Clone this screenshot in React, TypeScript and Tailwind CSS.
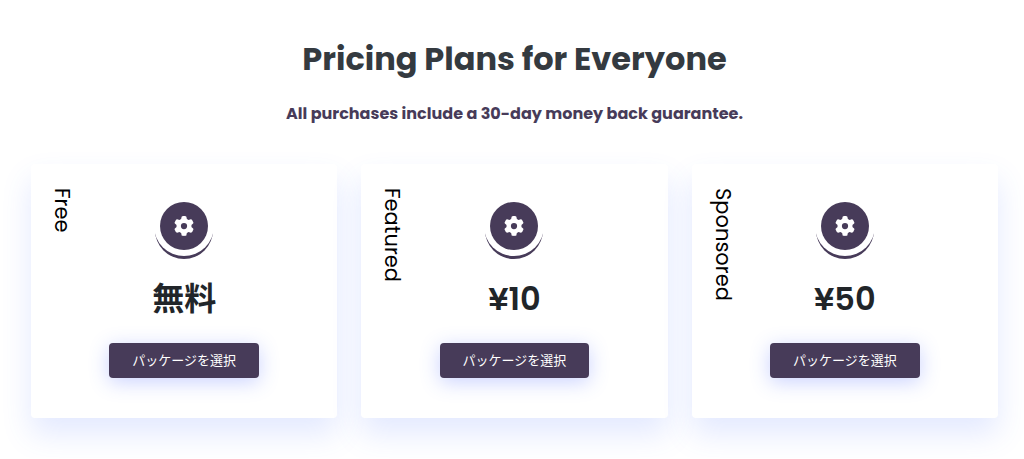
import { FaGear } from "react-icons/fa6";

type Plan = { name: string; price: string };

const plans: Plan[] = [
  { name: "Free", price: "無料" },
  { name: "Featured", price: "¥10" },
  { name: "Sponsored", price: "¥50" },
];

function PlanCard({ name, price }: Plan) {
  return (
    <article className="grid grid-cols-[30px_1fr_30px] rounded bg-white px-4 pt-6 pb-10 shadow-[0_16px_30px_rgba(65,105,255,0.15)]">
      <h3 className="justify-self-end text-[21px] leading-[30px] font-normal text-black [writing-mode:vertical-rl]">
        {name}
      </h3>
      <div className="flex flex-col items-center pt-2">
        <div className="rounded-full bg-white p-[6px] shadow-[0_4px_0_-1px_#473b59]">
          <div className="flex size-12 items-center justify-center rounded-full bg-[#473b59] text-white">
            <FaGear className="size-5" aria-hidden="true" />
          </div>
        </div>
        <p className="mt-[23px] text-[32px] leading-10 font-semibold text-[#212529]">{price}</p>
        <button
          type="button"
          className="mt-6 h-[35px] rounded bg-[#473b59] px-[23px] text-[13px] whitespace-nowrap text-white shadow-[0_4px_20px_rgba(65,95,255,0.28)]"
        >
          パッケージを選択
        </button>
      </div>
    </article>
  );
}

export default function App() {
  return (
    <main className="bg-white pt-[35px] pr-[26px] pb-10 pl-[31px] font-['Poppins','Inter','Noto_Sans_CJK_JP',sans-serif]">
      <header className="text-center">
        <h1 className="text-[32px] leading-12 font-bold text-[#343a40]">Pricing Plans for Everyone</h1>
        <p className="mt-[17px] text-base leading-7 font-bold text-[#473b59]">
          All purchases include a 30-day money back guarantee.
        </p>
      </header>
      <section className="mt-9 grid grid-cols-3 gap-6">
        {plans.map((plan) => (
          <PlanCard key={plan.name} {...plan} />
        ))}
      </section>
    </main>
  );
}
